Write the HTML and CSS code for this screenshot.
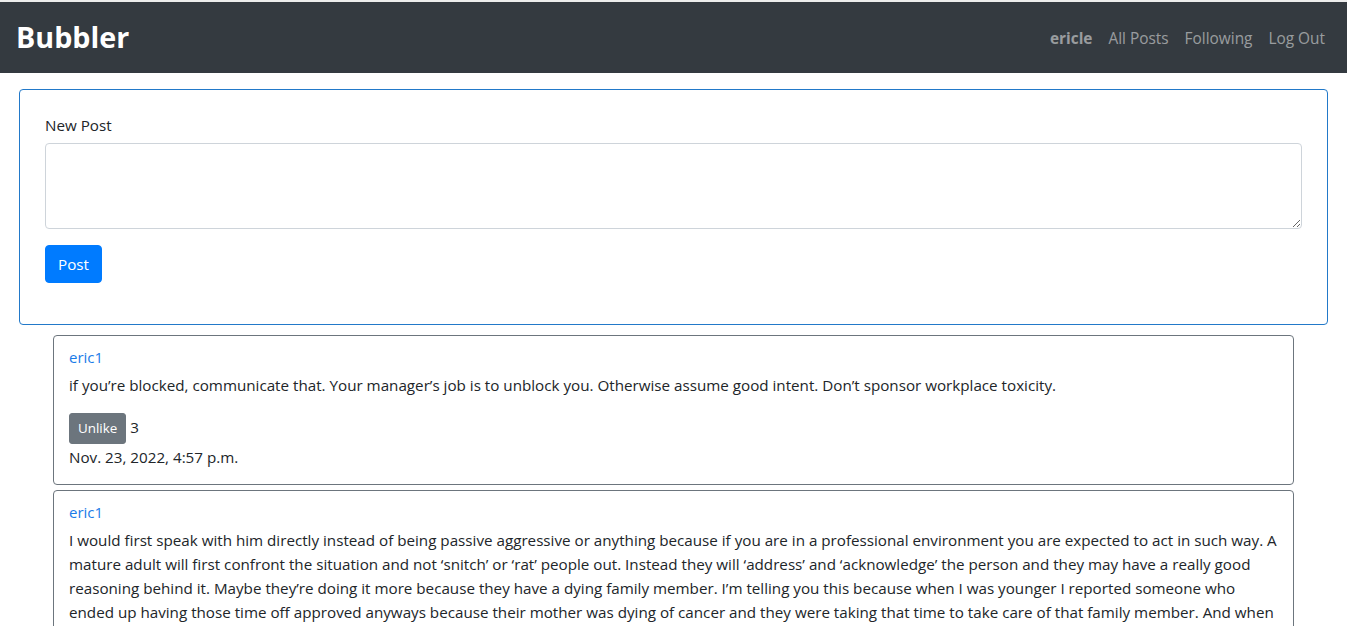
FILE: index.html
```html
<!DOCTYPE html>
<html lang="en">
<head>
<meta charset="utf-8">
<title>Bubbler</title>
<link rel="stylesheet" href="styles.css">
</head>
<body>
<nav class="navbar">
  <a class="brand" href="#">Bubbler</a>
  <ul class="nav">
    <li><a class="nav-link user" href="#">ericle</a></li>
    <li><a class="nav-link" href="#">All Posts</a></li>
    <li><a class="nav-link" href="#">Following</a></li>
    <li><a class="nav-link" href="#">Log Out</a></li>
  </ul>
</nav>
<main>
  <form class="new-post">
    <label class="label" for="content">New Post</label>
    <textarea id="content" class="textarea" rows="3"></textarea>
    <button type="button" class="btn btn-primary">Post</button>
  </form>
  <div class="posts">
    <div class="post">
      <a class="author" href="#">eric1</a>
      <p class="content">if you’re blocked, communicate that. Your manager’s job is to unblock you. Otherwise assume good intent. Don’t sponsor workplace toxicity.</p>
      <div class="likes"><button type="button" class="btn btn-secondary btn-sm">Unlike</button> 3</div>
      <div class="date">Nov. 23, 2022, 4:57 p.m.</div>
    </div>
    <div class="post">
      <a class="author" href="#">eric1</a>
      <p class="content">I would first speak with him directly instead of being passive aggressive or anything because if you are in a professional environment you are expected to act in such way. A mature adult will first confront the situation and not ‘snitch’ or ‘rat’ people out. Instead they will ‘address’ and ‘acknowledge’ the person and they may have a really good reasoning behind it. Maybe they’re doing it more because they have a dying family member. I’m telling you this because when I was younger I reported someone who ended up having those time off approved anyways because their mother was dying of cancer and they were taking that time to take care of that family member. And when I found out about it I felt really bad about what I had done, so talk to them first before going to anyone else.</p>
      <div class="likes"><button type="button" class="btn btn-secondary btn-sm">Unlike</button> 2</div>
      <div class="date">Nov. 23, 2022, 4:55 p.m.</div>
    </div>
  </div>
</main>
</body>
</html>
```

FILE: styles.css
```css
* { box-sizing: border-box; }
html, body { margin: 0; padding: 0; }
body {
  font-family: "Open Sans", "Noto Sans", sans-serif;
  font-size: 15.2px;
  line-height: 24px;
  color: #212529;
  background: #fff;
}
a { text-decoration: none; }
.navbar {
  border-top: 2px solid #ececec;
  background: #343a40;
  height: 73px;
  display: flex;
  align-items: center;
  justify-content: space-between;
  padding: 0 14px 0 16px;
}
.brand {
  color: #fff;
  font-size: 28.7px;
  font-weight: 700;
  line-height: 1.2;
}
.nav {
  list-style: none;
  margin: 0;
  padding: 0;
  display: flex;
}
.nav-link {
  display: block;
  padding: 10px 8px 8px;
  font-size: 15.4px;
  color: rgba(255,255,255,.5);
}
.nav-link.user { font-weight: 700; }
main { padding: 16px 19px 0; }
.new-post {
  border: 1px solid #2279c9;
  border-radius: 4px;
  padding: 23px 25px 25px;
  display: flex;
  flex-direction: column;
  align-items: flex-start;
}
.label { margin-bottom: 6px; }
.textarea {
  width: 100%;
  height: 86px;
  padding: 6px 12px;
  border: 1px solid #ced4da;
  border-radius: 4px;
  font: inherit;
  resize: vertical;
  margin-bottom: 16px;
}
.btn {
  display: inline-block;
  font-family: inherit;
  font-size: 15.2px;
  line-height: 24px;
  padding: 6px 12px;
  border: 1px solid transparent;
  border-radius: 4px;
  vertical-align: middle;
  color: #fff;
  cursor: pointer;
}
.btn-primary { background: #007bff; border-color: #007bff; margin-bottom: 16px; }
.btn-secondary { background: #6c757d; border-color: #6c757d; }
.btn-sm { font-size: 13.4px; line-height: 21px; padding: 4px 8px; border-radius: 3px; }
.posts {
  padding: 10px 34px 0;
  display: flex;
  flex-direction: column;
  gap: 5px;
}
.post {
  border: 1px solid #6c757d;
  border-radius: 4px;
  padding: 10px 15px 15px;
}
.author {
  display: block;
  color: #1a7be8;
  font-size: 15px;
  line-height: 22px;
  margin-bottom: 5px;
}
.content { margin: 0 0 16px; }
.likes { margin-bottom: 1px; }
```
